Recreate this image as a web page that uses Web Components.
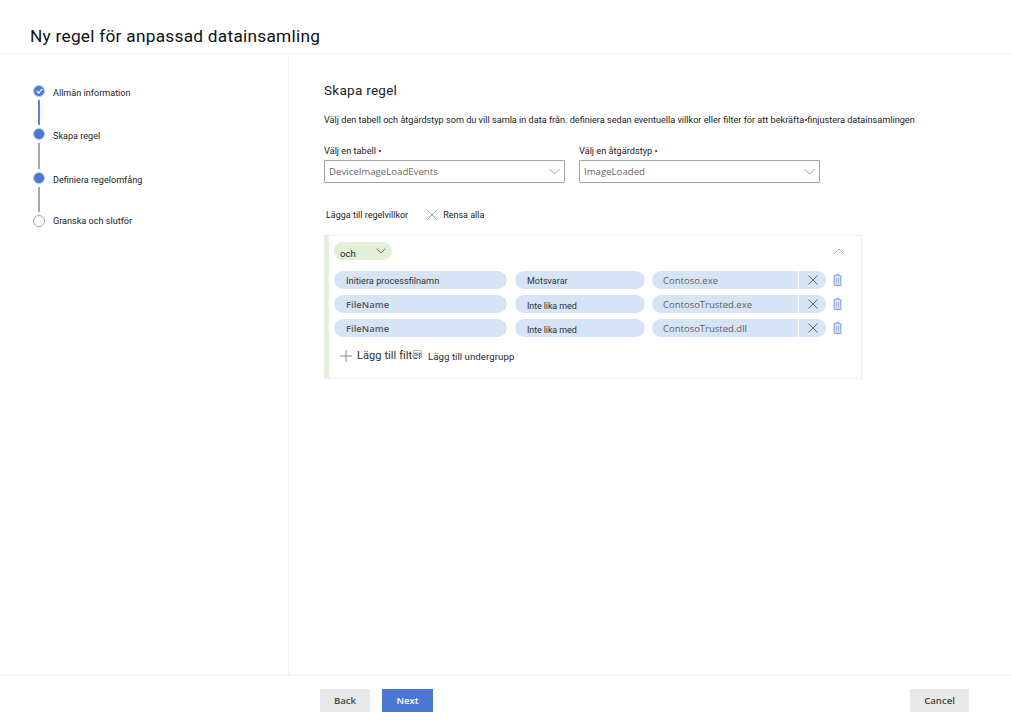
<!DOCTYPE html>
<html lang="sv">
<head>
<meta charset="utf-8">
<title>Ny regel</title>
<style>
html, body { margin: 0; height: 100%; background: #fff; font-family: "Open Sans", sans-serif; }
</style>
</head>
<body>
<rule-wizard></rule-wizard>
<script>
const CHEVRON_DOWN = `<svg width="11" height="7" viewBox="0 0 11 7" fill="none" stroke="#9a9a9a" stroke-width="1"><path d="M.5 1l5 5 5-5"/></svg>`;
const CLOSE = `<svg width="10" height="10" viewBox="0 0 10 10" fill="none" stroke="#666" stroke-width="1"><path d="M.5.5l9 9M9.5.5l-9 9"/></svg>`;
const TRASH = `<svg width="9" height="12" viewBox="0 0 9 12" fill="none" stroke="#7f9bcf" stroke-width="1"><path d="M.5 2h8M3 2V.7h3V2"/><path d="M1.2 2v9.4h6.6V2" fill="#dfe8f7"/><path d="M3.5 4v5.5M5.5 4v5.5" stroke="#9db3dc"/></svg>`;

class StepItem extends HTMLElement {
    constructor() {
        super();
        this.shadowDOM = this.attachShadow({ mode: 'open' });
    }
    connectedCallback() {
        const state = this.getAttribute('state');
        const mark = state === 'done'
            ? `<svg width="7" height="6" viewBox="0 0 7 6" fill="none" stroke="#fff" stroke-width="1.2"><path d="M.7 3l2 2L6.3.8"/></svg>`
            : '';
        this.shadowDOM.innerHTML = `
        <style>
        :host { display: flex; flex-direction: column; }
        .row { display: flex; align-items: center; height: 14px; }
        .dot {
            box-sizing: border-box; width: 12px; height: 12px; border-radius: 50%; margin-right: 8px; flex: none;
            display: flex; align-items: center; justify-content: center;
            background: #4a78d2; border: 1px solid #b9cbee;
        }
        :host([state="todo"]) .dot { background: #fff; border: 1px solid #a3a3a3; }
        span { font: 9.1px "Roboto", sans-serif; color: #222; padding-top: 4px; }
        :host([state="todo"]) span { padding-top: 0; }
        .line { width: 1.5px; height: 25.3px; margin: 2px 0 2px 5.2px; background: #a6a6a6; }
        :host([line="blue"]) .line { background: #5b84d6; }
        :host(:not([line])) .line { display: none; }
        </style>
        <div class="row"><div class="dot">${mark}</div><span><slot></slot></span></div>
        <div class="line"></div>`;
    }
}
customElements.define('step-item', StepItem);

class DropSelect extends HTMLElement {
    constructor() {
        super();
        this.shadowDOM = this.attachShadow({ mode: 'open' });
    }
    connectedCallback() {
        this.shadowDOM.innerHTML = `
        <style>
        :host { display: flex; flex-direction: column; width: 241px; }
        label { font: 9.2px/10px "Roboto", sans-serif; color: #222; height: 14px; }
        .box {
            box-sizing: border-box; height: 23px; display: flex; align-items: center;
            justify-content: space-between; padding: 0 4px 0 4px;
            border: 1px solid #a2a2a2; border-radius: 1px;
        }
        .box span { font: 9.65px "Open Sans", sans-serif; color: #666; }
        </style>
        <label>${this.getAttribute('label')}</label>
        <div class="box"><span><slot></slot></span>${CHEVRON_DOWN}</div>`;
    }
}
customElements.define('drop-select', DropSelect);

class FilterRow extends HTMLElement {
    constructor() {
        super();
        this.shadowDOM = this.attachShadow({ mode: 'open' });
    }
    connectedCallback() {
        const bold = this.hasAttribute('bold');
        this.shadowDOM.innerHTML = `
        <style>
        :host { display: flex; align-items: center; height: 18px; }
        .pill {
            box-sizing: border-box; height: 18px; background: #d6e4f6; display: flex; align-items: center;
            border-radius: 9px; font: 9.2px "Roboto", sans-serif; color: #333;
        }
        .field { width: 173px; padding-left: 12px; margin-right: 8px; }
        .field.bold { font: 600 9.4px "Open Sans", sans-serif; letter-spacing: .05px; color: #555; }
        .op { width: 130px; padding-left: 12px; margin-right: 7px; padding-top: 1px; font-size: 9px; }
        .op.tight { padding-top: 3px; letter-spacing: -.12px; }
        .val {
            width: 146px; padding-left: 11px; border-radius: 9px 0 0 9px;
            font: 9.5px "Open Sans", sans-serif; color: #5f5f5f;
        }
        .del { width: 27px; margin-left: 1px; border-radius: 0 9px 9px 0; justify-content: center; }
        .trash { display: flex; margin-left: 7px; }
        </style>
        <div class="pill field ${bold ? 'bold' : ''}">${this.getAttribute('field')}</div>
        <div class="pill op ${bold ? 'tight' : ''}">${this.getAttribute('op')}</div>
        <div class="pill val">${this.getAttribute('value')}</div>
        <div class="pill del">${CLOSE}</div>
        <div class="trash">${TRASH}</div>`;
    }
}
customElements.define('filter-row', FilterRow);

class ConditionGroup extends HTMLElement {
    constructor() {
        super();
        this.shadowDOM = this.attachShadow({ mode: 'open' });
    }
    connectedCallback() {
        this.shadowDOM.innerHTML = `
        <style>
        :host {
            display: block; box-sizing: border-box; width: 538px; height: 144px;
            border: 1.5px solid #eeeeee; border-left: 5px solid #e4f0dc; padding: 6px 0 0 5px;
        }
        .top { display: flex; align-items: center; justify-content: space-between; padding-right: 16px; margin-bottom: 11px; }
        .and {
            display: flex; align-items: center; justify-content: space-between; box-sizing: border-box;
            width: 58px; height: 18px; border-radius: 9px; background: #e2f0d8; padding: 0 6px;
            font: 9.6px "Roboto", sans-serif; color: #222;
        }
        .and span { padding-top: 4px; }
        .rows { display: flex; flex-direction: column; gap: 6.2px; }
        .actions { display: flex; align-items: center; margin: 12px 0 0 6px; font-family: "Roboto", sans-serif; color: #2b2b2b; }
        .plus { margin-right: 5px; }
        .add { position: relative; font-size: 11px; letter-spacing: .08px; }
        .add svg { position: absolute; right: 0; top: 1px; }
        .sub { font-size: 9.75px; margin-left: 6px; padding-top: 2px; }
        </style>
        <div class="top">
            <div class="and"><span>och</span><svg width="10" height="6" viewBox="0 0 10 6" fill="none" stroke="#777" stroke-width="1"><path d="M.5.5L5 5 9.5.5"/></svg></div>
            <svg width="12" height="7" viewBox="0 0 12 7" fill="none" stroke="#9db1cf" stroke-width="1"><path d="M1 6l5-5 5 5"/></svg>
        </div>
        <div class="rows"><slot></slot></div>
        <div class="actions">
            <svg class="plus" width="12" height="12" viewBox="0 0 12 12" fill="none" stroke="#7d8ea6" stroke-width="1"><path d="M6 0v12M0 6h12"/></svg>
            <span class="add">Lägg till filter<svg width="9" height="8" viewBox="0 0 9 8" fill="none" stroke="#a9bbd6" stroke-width="1"><path d="M.5.5h8v7h-8zM.5 3h8M.5 5.3h8"/></svg></span><span class="sub">Lägg till undergrupp</span>
        </div>`;
    }
}
customElements.define('condition-group', ConditionGroup);

class WizButton extends HTMLElement {
    constructor() {
        super();
        this.shadowDOM = this.attachShadow({ mode: 'open' });
    }
    connectedCallback() {
        this.shadowDOM.innerHTML = `
        <style>
        :host {
            display: flex; align-items: center; justify-content: center; box-sizing: border-box; height: 23px; width: 50px;
            background: #e9e9e9; color: #444; font: 600 9.6px "Open Sans", sans-serif;
        }
        :host([primary]) { background: #4a78d2; color: #fff; width: 51px; }
        :host([wide]) { width: 59px; }
        </style>
        <slot></slot>`;
    }
}
customElements.define('wiz-button', WizButton);

class RuleWizard extends HTMLElement {
    constructor() {
        super();
        this.shadowDOM = this.attachShadow({ mode: 'open' });
    }
    connectedCallback() {
        this.shadowDOM.innerHTML = `
        <style>
        :host { display: flex; flex-direction: column; height: 720px; width: 1012px; overflow: hidden; }
        header {
            box-sizing: border-box; height: 54px; border-bottom: 1.5px solid #f0f0f0; padding: 25px 0 0 30px;
            font: 400 17.3px/22px "Roboto", sans-serif; letter-spacing: .25px; color: #111;
        }
        .middle { flex: 1; display: flex; min-height: 0; }
        nav { box-sizing: border-box; width: 289px; border-right: 1.5px solid #f2f2f2; padding: 30px 0 0 33px; }
        main { flex: 1; padding: 27px 0 0 35px; }
        h2 { margin: 0 0 15px; font: 400 13.5px/18px "Roboto", sans-serif; letter-spacing: .28px; color: #222; }
        p { margin: 0 0 19px; font: 9.15px/13px "Roboto", sans-serif; color: #222; white-space: nowrap; }
        .selects { display: flex; gap: 14px; margin-bottom: 25px; }
        .tools { display: flex; align-items: center; height: 14px; margin: 0 0 13px 2px; font: 9px "Roboto", sans-serif; color: #222; }
        .tools svg { margin: 0 5px 0 18px; }
        footer {
            box-sizing: border-box; height: 45px; border-top: 1.5px solid #f2f2f2; padding: 13px 43px 0 320px;
            display: flex; gap: 12px;
        }
        footer wiz-button[wide] { margin-left: auto; }
        </style>
        <header>Ny regel för anpassad datainsamling</header>
        <div class="middle">
            <nav>
                <step-item state="done" line="blue">Allmän information</step-item>
                <step-item state="active" line="grey">Skapa regel</step-item>
                <step-item state="active" line="grey">Definiera regelomfång</step-item>
                <step-item state="todo">Granska och slutför</step-item>
            </nav>
            <main>
                <h2>Skapa regel</h2>
                <p>Välj den tabell och åtgärdstyp som du vill samla in data från. definiera sedan eventuella villkor eller filter för att bekräfta•finjustera datainsamlingen</p>
                <div class="selects">
                    <drop-select label="Välj en tabell •">DeviceImageLoadEvents</drop-select>
                    <drop-select label="Välj en åtgärdstyp •">ImageLoaded</drop-select>
                </div>
                <div class="tools">Lägga till regelvillkor
                    <svg width="12" height="12" viewBox="0 0 12 12" fill="none" stroke="#8ea3c6" stroke-width="1"><path d="M.5.5l11 11M11.5.5l-11 11"/></svg>
                    Rensa alla</div>
                <condition-group>
                    <filter-row field="Initiera processfilnamn" op="Motsvarar" value="Contoso.exe"></filter-row>
                    <filter-row bold field="FileName" op="Inte lika med" value="ContosoTrusted.exe"></filter-row>
                    <filter-row bold field="FileName" op="Inte lika med" value="ContosoTrusted.dll"></filter-row>
                </condition-group>
            </main>
        </div>
        <footer>
            <wiz-button>Back</wiz-button>
            <wiz-button primary>Next</wiz-button>
            <wiz-button wide>Cancel</wiz-button>
        </footer>`;
    }
}
customElements.define('rule-wizard', RuleWizard);
</script>
</body>
</html>
